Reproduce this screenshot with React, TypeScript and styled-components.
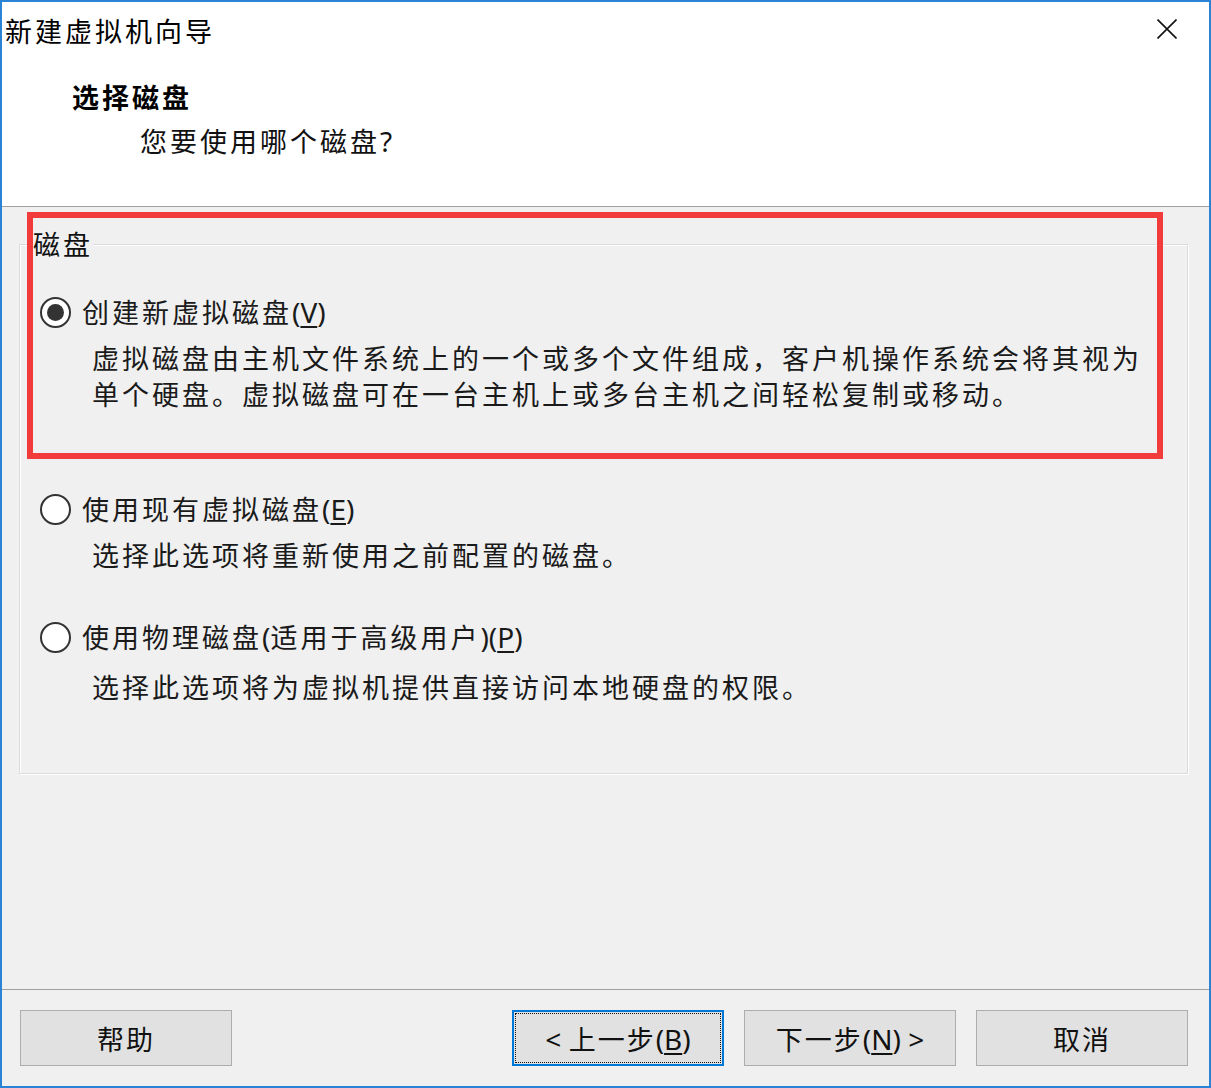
import React from "react";
import styled, { createGlobalStyle } from "styled-components";

const GlobalStyle = createGlobalStyle`
  html, body { margin: 0; padding: 0; }
  body {
    width: 1211px;
    height: 1088px;
    overflow: hidden;
    background: #f0f0f0;
    font-family: "Noto Sans CJK SC", "Microsoft YaHei", sans-serif;
    color: #000;
  }
  #root { height: 100%; }
`;

const Window = styled.div`
  position: relative;
  box-sizing: border-box;
  width: 1211px;
  height: 1088px;
  border: 2px solid #2b83d6;
  display: flex;
  flex-direction: column;
  background: #f0f0f0;
`;

const Header = styled.header`
  flex: none;
  height: 204px;
  background: #fff;
  border-bottom: 1px solid #a0a0a0;
  display: flex;
  flex-direction: column;
`;

const TitleBar = styled.div`
  height: 58px;
  display: flex;
  align-items: center;
  justify-content: space-between;
  padding: 0 32px 0 3px;
`;

const Title = styled.div`
  font-size: 27px;
  line-height: 36px;
  letter-spacing: 3px;
  color: #000;
`;

const CloseButton = styled.button`
  width: 20px;
  height: 20px;
  padding: 0;
  border: none;
  background: transparent;
  display: flex;
  margin-top: -4px;
`;

const Heading = styled.div`
  margin-top: 19px;
  padding-left: 70px;
  font-size: 27px;
  line-height: 36px;
  letter-spacing: 3px;
  font-weight: 700;
`;

const Subtitle = styled.div`
  margin-top: 8px;
  padding-left: 138px;
  font-size: 27px;
  line-height: 36px;
  letter-spacing: 3px;
  color: #111;
`;

const Body = styled.main`
  flex: 1;
  padding: 22px 21px 0 17px;
`;

const GroupBox = styled.fieldset`
  box-sizing: border-box;
  margin: 0;
  min-width: 0;
  height: 545px;
  padding: 35px 0 0 0;
  border: 1px solid #dcdcdc;
  box-shadow: 1px 1px 0 #fff, inset 1px 1px 0 #fff;
`;

const GroupLabel = styled.legend`
  margin-left: 13px;
  padding: 0;
  font-size: 27px;
  line-height: 30px;
  letter-spacing: 3px;
  background: #f0f0f0;
  color: #111;
`;

const OptionRow = styled.label<{ $top: number }>`
  display: flex;
  align-items: center;
  gap: 11px;
  height: 36px;
  padding-left: 20px;
  margin-top: ${(p) => p.$top}px;
  font-size: 27px;
  line-height: 36px;
  letter-spacing: 3px;
  color: #1a1a1a;
`;

const Radio = styled.span<{ $checked?: boolean }>`
  box-sizing: border-box;
  flex: none;
  width: 31px;
  height: 31px;
  border-radius: 50%;
  border: 2px solid #333;
  background: #fff;
  display: flex;
  align-items: center;
  justify-content: center;

  &::after {
    content: "";
    display: ${(p) => (p.$checked ? "block" : "none")};
    width: 17px;
    height: 17px;
    border-radius: 50%;
    background: #333;
  }
`;

const Latin = styled.span`
  font-family: "Noto Sans", "Open Sans", sans-serif;
  font-size: 28px;
  letter-spacing: 0;
`;

const Key = styled.u`
  text-underline-offset: 3px;
  text-decoration-thickness: 2px;
`;

const Description = styled.p<{ $top: number }>`
  margin: ${(p) => p.$top}px 0 0 0;
  padding-left: 72px;
  font-size: 27px;
  line-height: 36px;
  letter-spacing: 3px;
  white-space: nowrap;
  color: #1a1a1a;
`;

const Footer = styled.footer`
  flex: none;
  height: 96px;
  border-top: 1px solid #a0a0a0;
  display: flex;
  align-items: center;
  justify-content: space-between;
  padding: 0 21px 0 18px;
`;

const ButtonGroup = styled.div`
  display: flex;
  gap: 20px;
`;

const Button = styled.button<{ $focused?: boolean }>`
  box-sizing: border-box;
  width: 212px;
  height: 56px;
  padding: 0;
  background: #e1e1e1;
  border: ${(p) => (p.$focused ? "2px solid #0078d7" : "1px solid #adadad")};
  outline: ${(p) => (p.$focused ? "1px dotted #111" : "none")};
  outline-offset: -4px;
  font-family: "Noto Sans CJK SC", "Microsoft YaHei", sans-serif;
  font-size: 27px;
  letter-spacing: 2px;
  color: #111;
`;

const Highlight = styled.div`
  position: absolute;
  left: 25px;
  top: 210px;
  width: 1136px;
  height: 247px;
  box-sizing: border-box;
  border: 6px solid #f23b3b;
  pointer-events: none;
`;

export default function App() {
  return (
    <>
      <GlobalStyle />
      <Window>
        <Header>
          <TitleBar>
            <Title>新建虚拟机向导</Title>
            <CloseButton aria-label="关闭">
              <svg width="20" height="20" viewBox="0 0 20 20">
                <path d="M0.5 0.5 L19.5 19.5 M19.5 0.5 L0.5 19.5" stroke="#111" strokeWidth="1.6" fill="none" />
              </svg>
            </CloseButton>
          </TitleBar>
          <Heading>选择磁盘</Heading>
          <Subtitle>
            您要使用哪个磁盘<Latin>?</Latin>
          </Subtitle>
        </Header>
        <Body>
          <GroupBox>
            <GroupLabel>磁盘</GroupLabel>
            <OptionRow $top={0}>
              <Radio $checked />
              <span>
                创建新虚拟磁盘<Latin>(<Key>V</Key>)</Latin>
              </span>
            </OptionRow>
            <Description $top={10}>
              虚拟磁盘由主机文件系统上的一个或多个文件组成，客户机操作系统会将其视为
              <br />
              单个硬盘。虚拟磁盘可在一台主机上或多台主机之间轻松复制或移动。
            </Description>
            <OptionRow $top={79}>
              <Radio />
              <span>
                使用现有虚拟磁盘<Latin>(<Key>E</Key>)</Latin>
              </span>
            </OptionRow>
            <Description $top={10}>选择此选项将重新使用之前配置的磁盘。</Description>
            <OptionRow $top={46}>
              <Radio />
              <span>
                使用物理磁盘<Latin>(</Latin>适用于高级用户<Latin>)(<Key>P</Key>)</Latin>
              </span>
            </OptionRow>
            <Description $top={14}>选择此选项将为虚拟机提供直接访问本地硬盘的权限。</Description>
          </GroupBox>
        </Body>
        <Footer>
          <Button>帮助</Button>
          <ButtonGroup>
            <Button $focused>
              <Latin>&lt; </Latin>上一步<Latin>(<Key>B</Key>)</Latin>
            </Button>
            <Button>
              下一步<Latin>(<Key>N</Key>) &gt;</Latin>
            </Button>
            <Button>取消</Button>
          </ButtonGroup>
        </Footer>
        <Highlight />
      </Window>
    </>
  );
}
